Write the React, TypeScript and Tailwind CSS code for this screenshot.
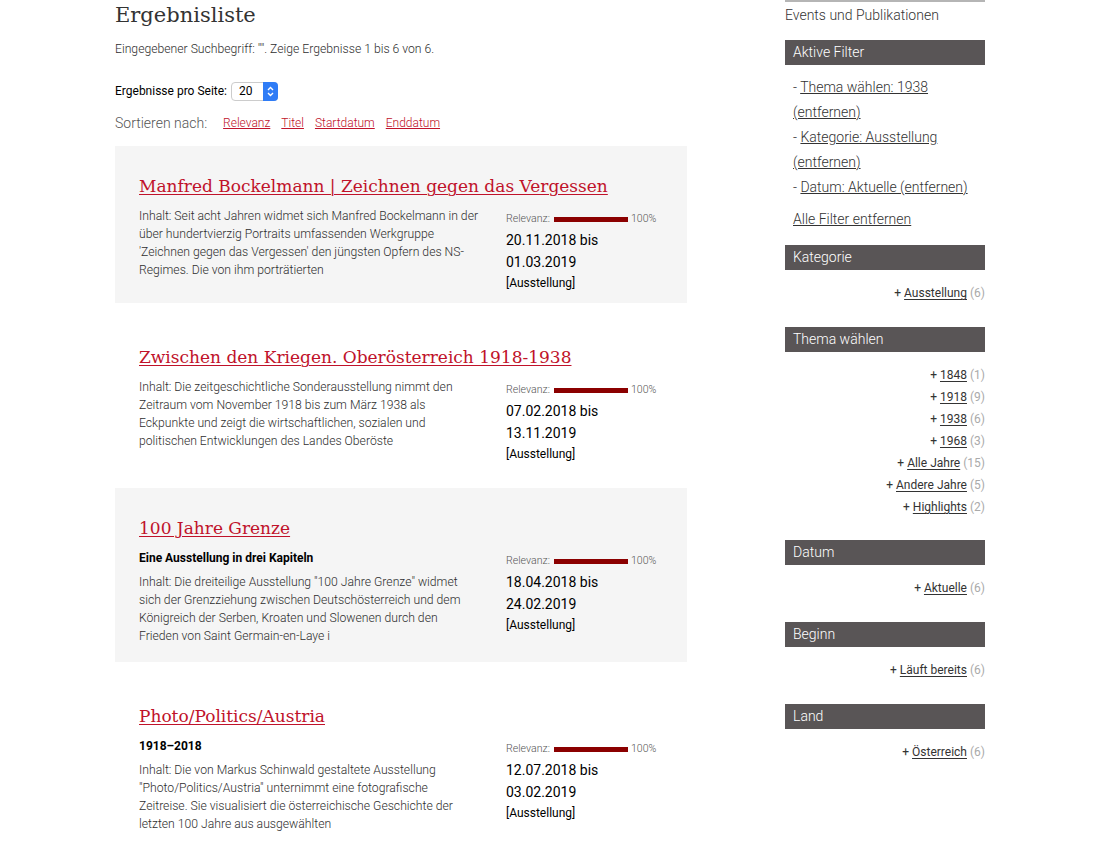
import React from 'react'

const RED = 'text-[#c0122a]'

interface Result {
  title: string
  subtitle?: string
  lines: string[]
  from: string
  to: string
  gray: boolean
}

const results: Result[] = [
  {
    title: 'Manfred Bockelmann | Zeichnen gegen das Vergessen',
    lines: [
      'Inhalt: Seit acht Jahren widmet sich Manfred Bockelmann in der',
      'über hundertvierzig Portraits umfassenden Werkgruppe',
      "'Zeichnen gegen das Vergessen' den jüngsten Opfern des NS-",
      'Regimes. Die von ihm porträtierten',
    ],
    from: '20.11.2018',
    to: '01.03.2019',
    gray: true,
  },
  {
    title: 'Zwischen den Kriegen. Oberösterreich 1918-1938',
    lines: [
      'Inhalt: Die zeitgeschichtliche Sonderausstellung nimmt den',
      'Zeitraum vom November 1918 bis zum März 1938 als',
      'Eckpunkte und zeigt die wirtschaftlichen, sozialen und',
      'politischen Entwicklungen des Landes Oberöste',
    ],
    from: '07.02.2018',
    to: '13.11.2019',
    gray: false,
  },
  {
    title: '100 Jahre Grenze',
    subtitle: 'Eine Ausstellung in drei Kapiteln',
    lines: [
      'Inhalt: Die dreiteilige Ausstellung "100 Jahre Grenze" widmet',
      'sich der Grenzziehung zwischen Deutschösterreich und dem',
      'Königreich der Serben, Kroaten und Slowenen durch den',
      'Frieden von Saint Germain-en-Laye i',
    ],
    from: '18.04.2018',
    to: '24.02.2019',
    gray: true,
  },
  {
    title: 'Photo/Politics/Austria',
    subtitle: '1918–2018',
    lines: [
      'Inhalt: Die von Markus Schinwald gestaltete Ausstellung',
      '"Photo/Politics/Austria" unternimmt eine fotografische',
      'Zeitreise. Sie visualisiert die österreichische Geschichte der',
      'letzten 100 Jahre aus ausgewählten',
    ],
    from: '12.07.2018',
    to: '03.02.2019',
    gray: false,
  },
]

const ResultCard = ({ r }: { r: Result }) => (
  <div className={`mb-[14px] px-6 pt-7 pb-[10px] ${r.gray ? 'bg-[#f5f5f5]' : 'bg-white'}`}>
    <a href="#" className={`block text-[17px] leading-[24px] underline underline-offset-2 decoration-1 ${RED} mb-[9px] whitespace-nowrap`} style={{ fontFamily: '"DejaVu Serif", serif' }}>
      {r.title}
    </a>
    <div className="flex">
      <div className="w-[367px] mb-[7px]">
        {r.subtitle && (
          <div className="text-[12px] leading-[18px] font-bold text-black mb-[6px]">{r.subtitle}</div>
        )}
        {r.lines.map((l) => (
          <div key={l} className="text-[12.2px] leading-[18px] font-light text-[#2e2e2e] whitespace-nowrap">
            {l}
          </div>
        ))}
      </div>
      <div className="flex-1">
        <div className="mt-[2px] flex h-[20px] items-center text-[10.6px] font-light text-[#555]">
          <span>Relevanz:</span>
          <span className="ml-[4px] h-[5px] w-[74px] bg-[#8b0000]"></span>
          <span className="ml-[3px]">100%</span>
        </div>
        <div className="text-[14px] leading-[22px] text-black">{r.from} bis</div>
        <div className="text-[14px] leading-[22px] text-black">{r.to}</div>
        <div className="text-[12px] leading-[20px] text-black">[Ausstellung]</div>
      </div>
    </div>
  </div>
)

const FacetHeader = ({ label }: { label: string }) => (
  <div className="h-[25px] bg-[#595556] pl-2 text-[14px] leading-[25px] font-light text-white">{label}</div>
)

const Facet = ({ label, items, tight }: { label: string; items: [string, number][]; tight?: boolean }) => (
  <div className={tight ? 'mb-[22px]' : 'mb-[23px]'}>
    <FacetHeader label={label} />
    <div className="pt-3 text-right text-[12px] leading-[22px] text-[#333]">
      {items.map(([name, count]) => (
        <div key={name}>
          + <a href="#" className="underline underline-offset-2">{name}</a>{' '}
          <span className="text-[#aaa]">({count})</span>
        </div>
      ))}
    </div>
  </div>
)

export default function App() {
  return (
    <div className="min-h-screen bg-white text-[#333]" style={{ fontFamily: 'Roboto, "Liberation Sans", sans-serif' }}>
      <div className="flex pl-[115px]">
        {/* Hauptspalte */}
        <div className="w-[572px]">
          <h1 className="text-[21px] leading-[30px] font-light text-[#333]" style={{ fontFamily: '"DejaVu Serif", serif' }}>
            Ergebnisliste
          </h1>
          <p className="mt-[10px] text-[12.2px] leading-[18px] font-light text-[#2e2e2e]">
            Eingegebener Suchbegriff: "". Zeige Ergebnisse 1 bis 6 von 6.
          </p>
          <div className="mt-[23px] flex h-[20px] items-center text-[12px] text-black">
            <span>Ergebnisse pro Seite:</span>
            <div className="ml-[4px] flex h-[19px] w-[47px] items-center rounded-[4px] border border-[#ccc] bg-white">
              <span className="flex-1 pl-[7px] text-[12px]">20</span>
              <span className="flex h-[19px] w-[15px] items-center justify-center rounded-r-[4px] bg-[#2f7cf6] -mr-px">
                <svg width="7" height="11" viewBox="0 0 7 11" fill="none" stroke="white" strokeWidth="1.4">
                  <path d="M1 4 L3.5 1.5 L6 4" />
                  <path d="M1 7 L3.5 9.5 L6 7" />
                </svg>
              </span>
            </div>
          </div>
          <div className="mt-[12px] flex h-[20px] items-center text-[12px]">
            <span className="text-[14px] font-light text-[#555]">Sortieren nach:</span>
            <div className={`ml-[16px] flex gap-[11px] font-light ${RED}`}>
              <a href="#" className="underline">Relevanz</a>
              <a href="#" className="underline">Titel</a>
              <a href="#" className="underline">Startdatum</a>
              <a href="#" className="underline">Enddatum</a>
            </div>
          </div>
          <div className="mt-[13px]">
            {results.map((r) => (
              <ResultCard key={r.title} r={r} />
            ))}
          </div>
        </div>

        {/* Seitenleiste */}
        <div className="ml-[98px] w-[200px]">
          <div className="border-t-2 border-[#b5b5b5] text-[14px] leading-[26px] font-light text-[#333]">
            Events und Publikationen
          </div>
          <div className="mt-[12px]">
            <FacetHeader label="Aktive Filter" />
            <div className="pt-[10px] pl-2 text-[14px] leading-[25px] font-light text-[#333]">
              <div>- <a href="#" className="underline">Thema wählen: 1938</a></div>
              <div><a href="#" className="underline">(entfernen)</a></div>
              <div>- <a href="#" className="underline">Kategorie: Ausstellung</a></div>
              <div><a href="#" className="underline">(entfernen)</a></div>
              <div>- <a href="#" className="underline">Datum: Aktuelle (entfernen)</a></div>
              <div className="mt-[7px]"><a href="#" className="underline">Alle Filter entfernen</a></div>
            </div>
          </div>
          <div className="mt-[13px]">
            <Facet label="Kategorie" items={[['Ausstellung', 6]]} />
            <Facet
              label="Thema wählen"
              tight
              items={[
                ['1848', 1],
                ['1918', 9],
                ['1938', 6],
                ['1968', 3],
                ['Alle Jahre', 15],
                ['Andere Jahre', 5],
                ['Highlights', 2],
              ]}
            />
            <Facet label="Datum" items={[['Aktuelle', 6]]} />
            <Facet label="Beginn" items={[['Läuft bereits', 6]]} />
            <Facet label="Land" items={[['Österreich', 6]]} />
          </div>
        </div>
      </div>
    </div>
  )
}
